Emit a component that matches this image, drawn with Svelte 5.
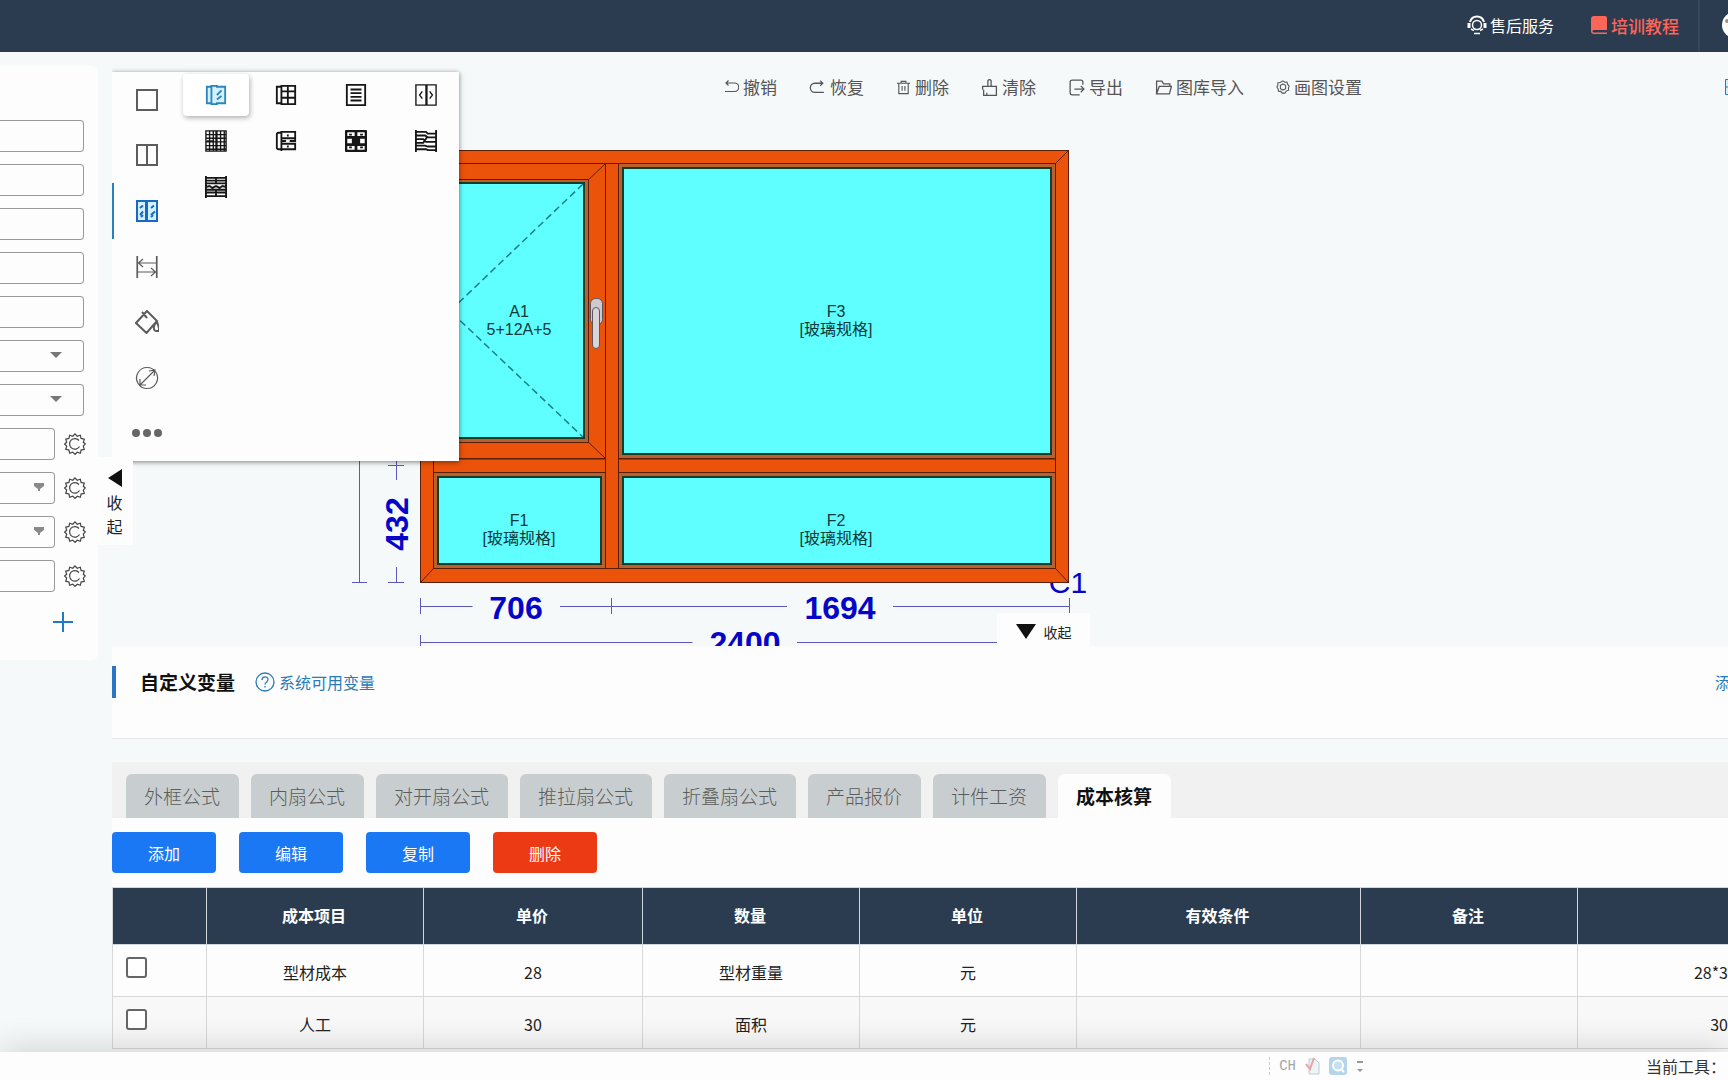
<script>
    const fields = [
        { type: 'text', label: '名称' },
        { type: 'text', label: '编号' },
        { type: 'text', label: '系列' },
        { type: 'text', label: '宽度' },
        { type: 'text', label: '高度' },
        { type: 'select', label: '型材颜色' },
        { type: 'select', label: '开启方向' },
        { type: 'text', label: '玻璃', gear: true },
        { type: 'select', label: '执手', gear: true },
        { type: 'select', label: '铰链', gear: true },
        { type: 'text', label: '备注', gear: true },
    ];

    const actions = [
        { text: '撤销', w: 16, d: 'M3 4h8.500a4 4 0 0 1 0 8.500H2M5.500 1.500L3 4l2.500 2.500' },
        { text: '恢复', w: 17, d: 'M13 4H5.500a4 4 0 0 0 0 8.500H14M10.500 1.500L13 4l-2.500 2.500' },
        { text: '删除', w: 15, d: 'M1 3.500h14M5.500 3.500v-2h5v2M3 3.500v11h10v-11M6.500 6.500v5M9.500 6.500v5' },
        { text: '清除', w: 17, d: 'M6.500 7V1.500q1.500-2 3 0V7M1.500 10V7h13v3M2.500 10v5.500h12V10M5.500 13v2.500' },
        { text: '导出', w: 17, d: 'M14 5.500V3q0-2-2-2H4Q2 1 2 3v10q0 2 2 2h7M6 9.500h9M12 6.500l3 3-3 3' },
        { text: '图库导入', w: 17, d: 'M1.500 14V2h5l1.500 2.500h6V7M1.500 14L4 7h11.500l-2 7z' },
        { text: '画图设置', w: 14, d: 'M8 1l2 1.500 2.500-.2.700 2.500L15 7l-.8 2.200.3 2.500-2.500.7L10 15H7l-1.500-2-2.700-.2-.4-2.500L1 8l1.200-2-.2-2.600 2.600-.5zM8 4.500L11 6v4l-3 1.500L5 10V6z' },
    ];

    const tools = [
        { label: '外框', w: 2, d: 'M2 2h20v20H2z' },
        { label: '中梃', w: 2, d: 'M2 2h20v20H2zM12 2v20' },
        { label: '扇', d: 'M2 2h20v20H2zM12 2v20M11 2v20M5 9l3-2.500M5 16l3-3.500M6 18l2-2M16 9l3-2.500M16 16l4-3.500M16 18l2-2', active: true },
        { label: '尺寸', d: 'M2 1v22M22 1v22M2.500 1v22M21.500 1v22M3 8h18M8 4L3.500 8 8 12M3 17h18M16 13l4.500 4-4.500 4' },
        { label: '填充', w: 2, d: 'M12 1L1 13l10.500 10L22 11zM7 2l5 6M22 12c-4 2-4 9-1 9h3v-3z' },
        { label: '直径', d: 'M12 1.500a10.500 10.500 0 1 0 .1 0zM5 19L20 4M14 5l6-1-1 6M5 13v6h6' },
        { label: '更多', dots: true },
    ];

    const sashes = [
        { label: '平开扇', active: true, w: 2, d: 'M7 3H2v18h5M7 1v22M7 2h6v1h9v18h-9v1H7M13 12l5-5M13 17l5-4' },
        { label: '格条扇', w: 2, d: 'M7 3H2v18h5M7 1v22M7 2h15v20H7M7 8h15M7 15h15M14 2v20' },
        { label: '百叶', w: 2, d: 'M2 1h20v22H2zM6 6h12M6 10h12M6 14h12M6 18h12' },
        { label: '推拉扇', d: 'M1 1h22v22H1zM12 1v22M13 1v22M8 8l-3 4 3 4M16 8l3 4-3 4' },
        { label: '纱窗', d: 'M1 1h22v22H1zM1 5h22M1 9h22M1 13h22M1 17h22M1 21h22M5 1v22M9 1v22M12 1v22M13 1v22M17 1v22M21 1v22M2 12h8' },
        { label: '门扇', w: 2, d: 'M7 3H4Q2 3 2 5v14q0 2 2 2h3M7 1v22M7 2h15v7H7M22 9v3h-6M7 12h5M7 15h15v6H8M14 5v2M14 17v2' },
        { label: '对开门', w: 3, d: 'M3 1h18q2 0 2 2v18q0 2-2 2H3q-2 0-2-2V3q0-2 2-2zM12 1v22M1 8h22M1 16h22M9 9v6M15 9v6M6 4v2M18 4v2M6 18v2M18 18v2' },
        { label: '折叠扇', w: 2, d: 'M1 0v24M23 0v24M1 2h11l2 2h9M1 6h10l3 2h9M1 10h8l3 3h11M1 14h8l4-6M1 17h10l3 1h9M1 21h11l2 1h9' },
        { label: '组合百叶', w: 2, d: 'M1 0v24M23 0v24M1 2h22M1 5h22M1 8h22M1 12l4-1 3 2 4-2 4 2 3-2 4 1M1 15h22M1 18h22M1 22h22M12 1v8M12 15v8' },
    ];

    const tabs = ['外框公式', '内扇公式', '对开扇公式', '推拉扇公式', '折叠扇公式', '产品报价', '计件工资', '成本核算'];
    let activeTab = $state('成本核算');

    const columns = ['', '成本项目', '单价', '数量', '单位', '有效条件', '备注', ''];
    const rows = [
        { cells: ['型材成本', '28', '型材重量', '元', '', ''], total: '28*3' },
        { cells: ['人工', '30', '面积', '元', '', ''], total: '30' },
    ];

    // fixed panes: outer edge of the bead and the name drawn in the middle
    const panes = [
        { x: 321, y: 420, w: 172, h: 96, name: 'F1', cx: 407, cy: 474 },
        { x: 506, y: 420, w: 437, h: 96, name: 'F2', cx: 724, cy: 474 },
        { x: 506, y: 111, w: 437, h: 295, name: 'F3', cx: 724, cy: 265 },
    ];
</script>

<div class="page">
    <header>
        <a href="#service" class="service">
            <svg width="20" height="20" viewBox="0 0 20 20" fill="none" stroke="#fff" stroke-width="1.500">
                <circle cx="10" cy="10" r="4.500" />
                <path d="M3 7C5-.5 15-.5 17 7" stroke-width="2" />
                <path d="M2 8v5M18 8v5" stroke-width="3" />
                <path d="M4 14l3 1.500M16 14l-3 1.500M7 18.500h6" />
            </svg>
            售后服务
        </a>
        <a href="#course" class="course">
            <svg width="17" height="20" viewBox="0 0 17 20">
                <path d="M3 1h11q2 0 2 2v12H3q-1.500 0-1.500 1.300T3 17.500h13V19H3q-3 0-3-3V4q0-3 3-3z" fill="#fb6659" />
            </svg>
            培训教程
        </a>
        <button class="account" aria-label="账户">
            <svg width="26" height="26" viewBox="0 0 26 26">
                <circle cx="13" cy="13" r="13" fill="#fff" />
                <circle cx="5" cy="9" r="2" fill="#a98d80" />
            </svg>
        </button>
    </header>

    <main>
        <aside>
            <form class="props">
                {#each fields as f}
                    <div class="field">
                        <div class="box" class:short={f.gear}>
                            {#if f.type === 'select'}
                                <select aria-label={f.label}><option></option></select>
                                <svg class="arrow" width="12" height="8" viewBox="0 0 12 8">
                                    {#if f.gear}
                                        <path d="M1 0h10v3L7 6v2H5V6L1 3z" fill="#8a8a8a" />
                                    {:else}
                                        <path d="M0 1h12L6 7z" fill="#777" />
                                    {/if}
                                </svg>
                            {:else}
                                <input type="text" aria-label={f.label} />
                            {/if}
                        </div>
                        {#if f.gear}
                            <button type="button" class="icon-btn" aria-label="{f.label}设置">
                                <svg width="22" height="22" viewBox="0 0 22 22" fill="none" stroke="#444" stroke-width="1.200">
                                    <path d="M11 .8l2.200 2.400 3.100-1 .8 3.200 3.200.8-1 3.100 2 1.700-2 2.200 1 3.100-3.200.8-.8 3.200-3.100-1L11 21.400l-2.200-2.200-3.100 1-.8-3.200-3.200-.8 1-3.100L.7 11l2-1.700-1-3.100 3.200-.8.8-3.200 3.100 1z" />
                                    <path d="M15 7.500a5.300 5.300 0 1 0 .5 6" />
                                </svg>
                            </button>
                        {/if}
                    </div>
                {/each}
                <button type="button" class="icon-btn add" aria-label="新增">
                    <svg width="20" height="20" viewBox="0 0 20 20" stroke="#1f7ac4" stroke-width="2">
                        <path d="M10 0v20M0 10h20" />
                    </svg>
                </button>
            </form>
            <button class="fold-side">
                <svg width="14" height="18" viewBox="0 0 14 18"><path d="M14 0v18L0 9z" fill="#111" /></svg>
                <span>收</span>
                <span>起</span>
            </button>
        </aside>

        <div class="content">
            <section class="canvas">
                <svg class="drawing" width="100%" height="100%">
                    <g stroke="#5b58b8" fill="none">
                        <path d="M247.500 380v150M240 530.500h15M284.500 400v28M276 413.500h16M284.500 515v15M276 530.500h16" />
                        <path d="M308.500 546v16M308.500 554.500h52M448 554.500h227M499.500 546v16M781 554.500h176M957.500 546v16" />
                        <path d="M308.500 583v11M308.500 590.500h272M685 590.500h272" />
                    </g>
                    <g class="dim">
                        <text x="404" y="567">706</text>
                        <text x="728" y="567">1694</text>
                        <text x="633" y="602">2400</text>
                        <text transform="translate(296 472) rotate(-90)">432</text>
                        <text class="code" x="956" y="541">C1</text>
                    </g>

                    <g stroke="#5a1d08" fill="#eb530b">
                        <rect x="308.500" y="98.500" width="648" height="432" />
                        <path d="M308.500 98.500l13 13M956.500 98.500l-13 13M308.500 530.500l13-14M956.500 530.500l-13-14" />
                        <rect x="321.500" y="111.500" width="622" height="405" />
                        <path d="M493.500 111.500v405M506.500 111.500v405M321.500 407h172M321.500 420.500h172M506.500 407h437M506.500 420.500h437" />
                        <rect x="321.500" y="111.500" width="172" height="295" />
                        <path d="M493.500 111.500l-21 20M493.500 406.500l-21-20" />
                        <rect x="338.500" y="127.500" width="138" height="263" fill="#b9602c" />
                        <rect x="342" y="131" width="130" height="255" fill="#5fffff" stroke="#123c2c" stroke-width="2" />
                        {#each panes as p}
                            <rect x={p.x + 0.5} y={p.y + 0.5} width={p.w} height={p.h} fill="#b9602c" />
                            <rect x={p.x + 5} y={p.y + 5} width={p.w - 9} height={p.h - 9} fill="#5fffff" stroke="#123c2c" stroke-width="2" />
                        {/each}
                    </g>

                    <path d="M471 132L338 259l133 126" fill="none" stroke="#1b7f86" stroke-width="1.500" stroke-dasharray="7 4" />
                    <g stroke="#5b5560">
                        <rect x="478.500" y="246.500" width="12" height="26" rx="5" fill="#cfcad0" />
                        <rect x="480.500" y="255.500" width="7" height="41" rx="3.500" fill="#d8d4d8" />
                    </g>

                    <g class="name">
                        <text x="407" y="265">A1</text>
                        <text x="407" y="283">5+12A+5</text>
                        {#each panes as p}
                            <text x={p.cx} y={p.cy}>{p.name}</text>
                            <text x={p.cx} y={p.cy + 18}>[玻璃规格]</text>
                        {/each}
                    </g>
                </svg>

                <nav class="actions">
                    {#each actions as a}
                        <button>
                            <svg width={a.w} height={a.w} viewBox="0 0 16 16" fill="none" stroke="#555" stroke-width="1.200">
                                <path d={a.d} />
                            </svg>
                            {a.text}
                        </button>
                    {/each}
                    <button class="layout-btn" aria-label="布局">
                        <svg width="16" height="16" viewBox="0 0 16 16" fill="#d6ecfa" stroke="#1f7ac4">
                            <path d="M.5.500h15v15H.5zM.5 8h15M8 .500v15" />
                        </svg>
                    </button>
                </nav>

                <div class="toolbox">
                    <div class="tool-list">
                        {#each tools as t}
                            <button class:active={t.active} aria-label={t.label}>
                                {#if t.dots}
                                    <svg width="30" height="24" viewBox="0 0 30 24" fill="#666">
                                        <circle cx="4" cy="12" r="4" />
                                        <circle cx="15" cy="12" r="4" />
                                        <circle cx="26" cy="12" r="4" />
                                    </svg>
                                {:else}
                                    <svg width="24" height="24" viewBox="0 0 24 24" fill={t.active ? '#d3f0ff' : 'none'} stroke={t.active ? '#1769c4' : '#5c5c5c'} stroke-width={t.active ? 2 : t.w || 1.2}>
                                        <path d={t.d} />
                                    </svg>
                                {/if}
                            </button>
                        {/each}
                    </div>
                    <div class="sash-grid">
                        {#each sashes as s}
                            <button class:active={s.active} aria-label={s.label}>
                                <svg width="22" height="22" viewBox="0 0 24 24" fill={s.active ? '#d3f0ff' : 'none'} stroke={s.active ? '#2b86bd' : '#161616'} stroke-width={s.w || 1.5}>
                                    <path d={s.d} />
                                </svg>
                            </button>
                        {/each}
                    </div>
                </div>

                <button class="fold-bottom">
                    <svg width="20" height="15" viewBox="0 0 20 15"><path d="M0 0h20L10 15z" fill="#111" /></svg>
                    收起
                </button>
            </section>

            <section class="vars">
                <h2>自定义变量</h2>
                <a href="#vars">
                    <svg width="20" height="20" viewBox="0 0 20 20" fill="none" stroke="#2a7ab8" stroke-width="1.300">
                        <circle cx="10" cy="10" r="9" />
                        <path d="M7 8c0-4 6-4 6-.5 0 2.500-3 2.300-3 5M10 14v1.600" />
                    </svg>
                    系统可用变量
                </a>
                <a href="#add" class="add-var">添</a>
            </section>

            <section class="formulas">
                <div class="tabs">
                    {#each tabs as tab}
                        <button class:active={tab === activeTab} onclick={() => (activeTab = tab)}>{tab}</button>
                    {/each}
                </div>
                <div class="ops">
                    <button>添加</button>
                    <button>编辑</button>
                    <button>复制</button>
                    <button class="danger">删除</button>
                </div>
                <table>
                    <colgroup>
                        <col class="c-check" />
                        <col class="c-mid" />
                        <col class="c-price" />
                        <col class="c-mid" />
                        <col class="c-mid" />
                        <col class="c-cond" />
                        <col class="c-mid" />
                        <col />
                    </colgroup>
                    <thead>
                        <tr>
                            {#each columns as c}<th>{c}</th>{/each}
                        </tr>
                    </thead>
                    <tbody>
                        {#each rows as r}
                            <tr>
                                <td class="check"><input type="checkbox" aria-label="选择{r.cells[0]}" /></td>
                                {#each r.cells as c}<td>{c}</td>{/each}
                                <td class="total">{r.total}</td>
                            </tr>
                        {/each}
                    </tbody>
                </table>
            </section>
        </div>
    </main>

    <footer>
        <div class="ime">
            <span class="grip"></span>
            <span>CH</span>
            <svg width="15" height="18" viewBox="0 0 15 18" fill="none">
                <path d="M4 2h6l4 4v11H4z" fill="#eef3f6" stroke="#b9cdd8" />
                <path d="M1 7l4 5 4-11" stroke="#e9a3a8" stroke-width="2" />
            </svg>
            <svg width="18" height="18" viewBox="0 0 18 18">
                <rect width="18" height="18" rx="3" fill="#b5d6ea" />
                <circle cx="9" cy="8.500" r="5" fill="#c5e0f0" stroke="#fff" stroke-width="2" />
                <path d="M12 12l3 3" stroke="#fff" stroke-width="2" />
            </svg>
            <svg width="8" height="14" viewBox="0 0 8 14" fill="#999">
                <path d="M1 2h6v2H1zM1 10h6l-3 3z" />
            </svg>
        </div>
        <span class="current">当前工具：</span>
    </footer>
</div>

<style>
    :global(body) {
        margin: 0;
        background: #f5f9fa;
        font-family: "Noto Sans CJK SC", "Noto Sans", sans-serif;
        font-size: 16px;
        color: #222;
    }

    button {
        font: inherit;
        color: inherit;
        border: 0;
        padding: 0;
        background: none;
        cursor: pointer;
    }

    a {
        text-decoration: none;
        white-space: nowrap;
    }

    svg {
        display: block;
        flex: none;
    }

    .page {
        height: 100vh;
        display: flex;
        flex-direction: column;
        overflow: hidden;
    }

    header {
        flex: none;
        height: 52px;
        padding-bottom: 2px;
        box-sizing: border-box;
        display: flex;
        align-items: center;
        justify-content: flex-end;
        overflow: hidden;
        background: #2b3c50;
    }

    header a {
        display: flex;
        align-items: center;
        gap: 3px;
    }

    .service {
        color: #fff;
        margin-right: 37px;
    }

    .course {
        color: #fb6659;
        font-size: 17px;
        font-weight: 500;
        margin-right: 19px;
    }

    .account {
        width: 30px;
        height: 54px;
        padding-left: 22px;
        border-left: 2px solid #35475c;
        box-sizing: border-box;
    }

    main {
        flex: 1;
        min-height: 0;
        display: flex;
        gap: 14px;
        overflow: hidden;
    }

    aside {
        flex: none;
        width: 98px;
        padding-top: 14px;
        position: relative;
    }

    .props {
        display: flex;
        flex-direction: column;
        gap: 12px;
        padding: 54px 12px 28px 0;
        background: #fdfdfd;
        border-radius: 0 6px 6px 0;
    }

    .field {
        display: flex;
        align-items: center;
        gap: 9px;
    }

    .box {
        position: relative;
        width: 84px;
        flex: none;
    }

    .box.short {
        width: 55px;
    }

    .box input,
    .box select {
        display: block;
        width: 100%;
        height: 32px;
        box-sizing: border-box;
        border: 1px solid #999;
        border-left: 0;
        border-radius: 0 4px 4px 0;
        background: #fdfdfd;
        appearance: none;
    }

    .arrow {
        position: absolute;
        right: 22px;
        top: 11px;
        pointer-events: none;
    }

    .short .arrow {
        right: 10px;
    }

    .add {
        margin: 8px 0 0 53px;
        width: 20px;
    }

    .fold-side {
        position: absolute;
        left: 98px;
        top: 405px;
        z-index: 1;
        width: 35px;
        height: 88px;
        box-sizing: border-box;
        display: flex;
        flex-direction: column;
        align-items: center;
        background: #fdfdfd;
        padding: 12px 2px 0 0;
        line-height: 24px;
    }

    .fold-side svg {
        margin-bottom: 3px;
    }

    .content {
        flex: 1;
        min-width: 0;
    }

    .canvas {
        position: relative;
        height: 594px;
        overflow: hidden;
    }

    .drawing {
        position: absolute;
        inset: 0;
    }

    .dim text {
        font: bold 32px "Liberation Sans", Arial, sans-serif;
        fill: #0505c8;
        text-anchor: middle;
    }

    .dim .code {
        font-size: 30px;
        font-weight: normal;
    }

    .name text {
        font: 16px "Liberation Sans", "Noto Sans CJK SC", sans-serif;
        fill: #0d3a3c;
        text-anchor: middle;
    }

    .actions {
        position: relative;
        display: flex;
        gap: 32px;
        padding: 23px 0 0 611px;
        color: #555;
        font-size: 17px;
        line-height: 24px;
    }

    .actions button {
        display: flex;
        align-items: center;
        gap: 4px;
        white-space: nowrap;
    }

    .actions .layout-btn {
        margin-left: auto;
        margin-right: -13px;
    }

    .toolbox {
        position: absolute;
        left: 0;
        top: 20px;
        width: 347px;
        height: 389px;
        display: flex;
        background: #fdfdfd;
        box-shadow: 0 1px 5px rgba(0, 0, 0, 0.5);
    }

    .tool-list {
        width: 69px;
        display: flex;
        flex-direction: column;
    }

    .tool-list button {
        flex: 1;
        display: flex;
        align-items: center;
        justify-content: center;
        border-left: 2px solid transparent;
        border-right: 2px solid transparent;
    }

    .tool-list button.active {
        border-left-color: #2a80bd;
    }

    .sash-grid {
        display: grid;
        grid-template-columns: repeat(4, 66px);
        grid-auto-rows: 42px;
        align-content: start;
        gap: 4px;
        padding: 2px 0 0 2px;
    }

    .sash-grid button {
        display: flex;
        align-items: center;
        justify-content: center;
        border-radius: 4px;
    }

    .sash-grid .active {
        background: #fff;
        box-shadow: 1px 2px 5px rgba(0, 0, 0, 0.3);
    }

    .fold-bottom {
        position: absolute;
        left: 885px;
        bottom: 0;
        width: 93px;
        height: 33px;
        display: flex;
        align-items: center;
        justify-content: center;
        gap: 8px;
        background: #fdfdfd;
        font-size: 14px;
        padding-top: 4px;
    }

    .vars {
        display: flex;
        align-items: flex-start;
        height: 93px;
        padding-top: 20px;
        box-sizing: border-box;
        background: #fdfdfd;
        border-bottom: 1px solid #e4e8ea;
        line-height: 32px;
        overflow: hidden;
    }

    .vars h2 {
        margin: 0 20px 0 0;
        padding-left: 24px;
        border-left: 4px solid #2a75c4;
        font-size: 19px;
        font-weight: 700;
        line-height: 32px;
        color: #111;
        white-space: nowrap;
    }

    .vars a {
        display: flex;
        align-items: center;
        gap: 4px;
        color: #2a7ab8;
    }

    .vars .add-var {
        margin-left: auto;
        margin-right: -3px;
    }

    .formulas {
        margin-top: 23px;
        background: #fdfdfd;
    }

    .tabs {
        display: flex;
        gap: 12px;
        padding: 12px 14px 0;
        background: #f1f1f1;
    }

    .tabs button {
        height: 44px;
        padding: 0 19px 2px 18px;
        border-radius: 6px 6px 0 0;
        background: #c8cecf;
        color: #5c5c5c;
        font-size: 19px;
        font-weight: 300;
        white-space: nowrap;
    }

    .tabs button.active {
        background: #fdfdfd;
        color: #111;
        font-weight: 700;
    }

    .ops {
        display: flex;
        gap: 23px;
        padding: 14px 0;
    }

    .ops button {
        width: 104px;
        height: 41px;
        border-radius: 4px;
        background: #1b78f5;
        color: #fff;
    }

    .ops .danger {
        background: #ec3a14;
    }

    table {
        width: 100%;
        table-layout: fixed;
        border-collapse: collapse;
    }

    .c-check {
        width: 94px;
    }

    .c-mid {
        width: 217px;
    }

    .c-price {
        width: 219px;
    }

    .c-cond {
        width: 284px;
    }

    th {
        height: 54px;
        padding: 0 2px 2px 0;
        background: #2b3c50;
        border: 1px solid #cfd6dc;
        color: #fff;
        font-weight: 700;
    }

    td {
        height: 52px;
        padding: 2px 0 0;
        box-sizing: border-box;
        border: 1px solid #d8d8d8;
        text-align: center;
    }

    th:last-child,
    td:last-child {
        border-right: 0;
    }

    tbody tr:nth-child(even) {
        background: #f8f8f8;
    }

    .check {
        text-align: left;
        padding: 0 0 6px 13px;
    }

    .check input {
        display: block;
        appearance: none;
        width: 21px;
        height: 21px;
        margin: 0;
        border: 2px solid #666;
        border-radius: 3px;
        background: #fff;
    }

    .total {
        text-align: right;
    }

    footer {
        position: relative;
        flex: none;
        height: 28px;
        padding-right: 2px;
        display: flex;
        align-items: center;
        justify-content: flex-end;
        gap: 282px;
        background: #fdfdfd;
        box-shadow: 0 0 36px rgba(0, 0, 0, 0.2);
    }

    .ime {
        display: flex;
        align-items: center;
        gap: 9px;
        color: #a5a5a5;
        font: 14px "Liberation Mono", monospace;
    }

    .grip {
        height: 18px;
        border-left: 1px dashed #ccc;
    }

    .current {
        color: #333;
        white-space: nowrap;
    }
</style>
